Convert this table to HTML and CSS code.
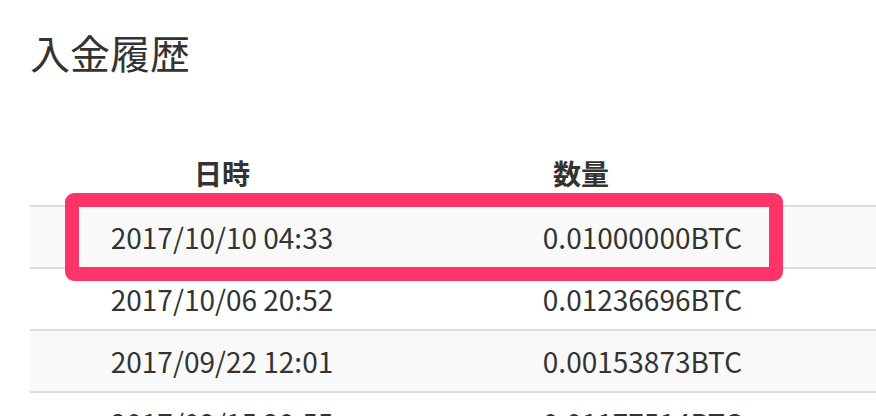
FILE: index.html
```html
<!DOCTYPE html>
<html lang="ja">
<head>
<meta charset="utf-8">
<link rel="stylesheet" href="styles.css">
</head>
<body>
<div class="page">
  <h1 class="title">入金履歴</h1>
  <div class="table">
    <div class="row head">
      <div class="cell c1">日時</div>
      <div class="cell c2">数量</div>
      <div class="cell c3"></div>
    </div>
    <div class="row odd first">
      <div class="cell c1">2017/10/10 04:33</div>
      <div class="cell c2">0.01000000BTC</div>
      <div class="cell c3"></div>
      <div class="highlight"></div>
    </div>
    <div class="row">
      <div class="cell c1">2017/10/06 20:52</div>
      <div class="cell c2">0.01236696BTC</div>
      <div class="cell c3"></div>
    </div>
    <div class="row odd">
      <div class="cell c1">2017/09/22 12:01</div>
      <div class="cell c2">0.00153873BTC</div>
      <div class="cell c3"></div>
    </div>
    <div class="row">
      <div class="cell c1">2017/09/15 20:55</div>
      <div class="cell c2">0.01177514BTC</div>
      <div class="cell c3"></div>
    </div>
  </div>
</div>
</body>
</html>
```
FILE: styles.css
```css
html, body {
  margin: 0;
  padding: 0;
  background: #fff;
  overflow: hidden;
}
body {
  width: 876px;
  height: 416px;
  font-family: "Noto Sans CJK JP", "DejaVu Sans", sans-serif;
  color: #333;
}
.page {
  padding: 0 0 0 30px;
}
.title {
  margin: 0;
  padding: 24px 0 0 0;
  font-size: 40px;
  font-weight: normal;
  line-height: 56px;
  color: #333;
}
.table {
  margin-top: 60px;
  width: 900px;
}
.row {
  display: grid;
  grid-template-columns: 384px 334px 1fr;
  height: 60px;
  border-bottom: 2px solid #ddd;
  align-items: center;
  font-size: 28px;
  position: relative;
}
.row.head {
  height: 65px;
  border-bottom: 2px solid #ddd;
  font-size: 28px;
  font-weight: bold;
  align-items: center;
}
.row.odd {
  background: #f9f9f9;
}
.cell {
  white-space: nowrap;
}
.c1 {
  text-align: center;
}
.c2 {
  text-align: right;
  padding-right: 6px;
}
.head .c2 {
  text-align: center;
  padding-right: 0;
  padding-left: 0;
}
.highlight {
  position: absolute;
  top: -14px;
  left: 35px;
  width: 690px;
  height: 60px;
  border: 14px solid #fd3468;
  border-radius: 9px;
}
```
